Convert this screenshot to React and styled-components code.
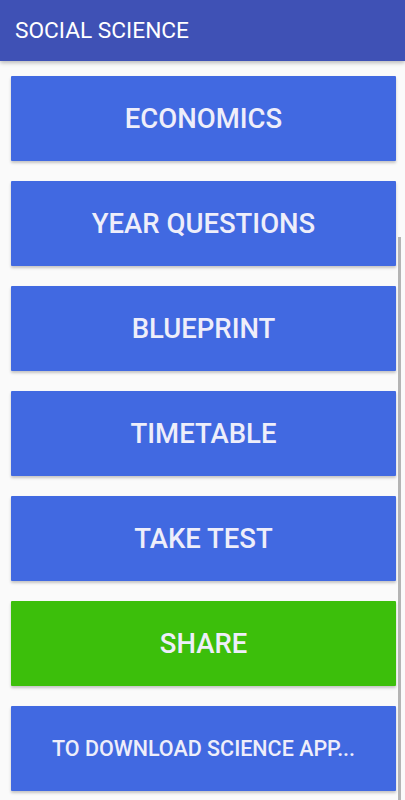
import React from "react";
import styled, { createGlobalStyle } from "styled-components";

const Global = createGlobalStyle`
  html, body { margin: 0; padding: 0; background: #fafafa; }
  body { font-family: Roboto, "Liberation Sans", sans-serif; }
`;

const Screen = styled.div`
  position: relative;
  width: 405px;
  height: 800px;
  overflow: hidden;
  background: #fafafa;
`;

const AppBar = styled.header`
  height: 61px;
  background: #3f51b5;
  display: flex;
  align-items: center;
  padding-left: 15px;
  box-shadow: 0 2px 4px rgba(0, 0, 0, 0.25);
  position: relative;
  z-index: 1;
`;

const Title = styled.h1`
  margin: 0;
  color: #ffffff;
  font-size: 22.7px;
  font-weight: 400;
  letter-spacing: 0;
`;

const List = styled.main`
  display: flex;
  flex-direction: column;
  gap: 20px;
  padding: 15px 9px 0 11px;
`;

const Button = styled.button`
  height: 85px;
  border: none;
  border-radius: 1px;
  background: ${(p) => (p.$green ? "#3cbf0b" : "#4169e1")};
  color: #eeeefa;
  font-family: Roboto, "Liberation Sans", sans-serif;
  font-weight: 500;
  font-size: ${(p) => (p.$small ? "21.5px" : "27.5px")};
  box-shadow: 0 2px 3px rgba(0, 0, 0, 0.22);
  display: flex;
  align-items: center;
  justify-content: center;
  padding: 0;
`;

const Scrollbar = styled.div`
  position: absolute;
  left: 398px;
  top: 237px;
  width: 3px;
  height: 563px;
  background: #b4b4b4;
`;

const items = [
  { label: "ECONOMICS" },
  { label: "YEAR QUESTIONS" },
  { label: "BLUEPRINT" },
  { label: "TIMETABLE" },
  { label: "TAKE TEST" },
  { label: "SHARE", green: true },
  { label: "TO DOWNLOAD SCIENCE APP...", small: true },
];

export default function App() {
  return (
    <Screen>
      <Global />
      <AppBar>
        <Title>SOCIAL SCIENCE</Title>
      </AppBar>
      <List>
        {items.map((it) => (
          <Button key={it.label} $green={it.green} $small={it.small}>
            {it.label}
          </Button>
        ))}
      </List>
      <Scrollbar />
    </Screen>
  );
}
